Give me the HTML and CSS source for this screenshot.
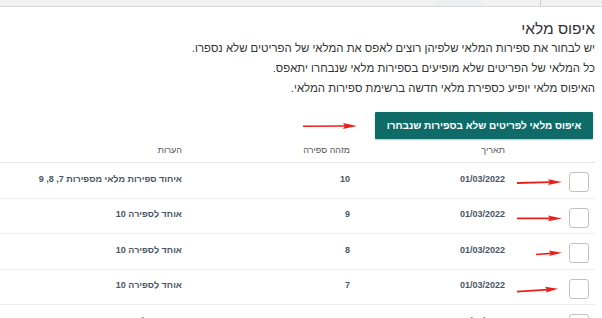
FILE: index.html
```html
<!DOCTYPE html>
<html lang="he" dir="rtl">
<head>
<meta charset="utf-8">
<link rel="stylesheet" href="styles.css">
</head>
<body>
<div class="topbar">
  <div class="tb-seg tb-a"></div>
  <div class="tb-seg tb-b"></div>
  <div class="tb-seg tb-c"></div>
  <div class="tb-seg tb-d"></div>
</div>
<main class="page">
  <h1 class="title">איפוס מלאי</h1>
  <div class="intro">
    <p>יש לבחור את ספירות המלאי שלפיהן רוצים לאפס את המלאי של הפריטים שלא נספרו.</p>
    <p>כל המלאי של הפריטים שלא מופיעים בספירות מלאי שנבחרו יתאפס.</p>
    <p>האיפוס מלאי יופיע כספירת מלאי חדשה ברשימת ספירות המלאי.</p>
  </div>
  <div class="actions">
    <button class="btn">איפוס מלאי לפריטים שלא בספירות שנבחרו</button>
    <svg class="arrow arrow-btn" width="56" height="8" viewBox="0 0 56 8"><path d="M2 4.2 L44 4" stroke="#e8211b" stroke-width="1.6" fill="none"/><path d="M56 4 L42 1 L44 4 L42 7 Z" fill="#e8211b"/></svg>
  </div>
  <div class="table">
    <div class="row head">
      <div class="c c-check"></div>
      <div class="c">תאריך</div>
      <div class="c">מזהה ספירה</div>
      <div class="c">הערות</div>
    </div>
    <div class="row">
      <div class="c c-check"><span class="box"></span><svg class="arrow" width="46" height="8" viewBox="0 0 46 8"><path d="M1 5 L34 4.2" stroke="#e8211b" stroke-width="1.8" fill="none"/><path d="M46 4 L32 1.2 L34 4.2 L32 7 Z" fill="#e8211b"/></svg></div>
      <div class="c">01/03/2022</div>
      <div class="c">10</div>
      <div class="c">איחוד ספירות מלאי מספירות 7, 8, 9</div>
    </div>
    <div class="row">
      <div class="c c-check"><span class="box"></span><svg class="arrow" width="46" height="8" viewBox="0 0 46 8"><path d="M1 4.4 L34 4.4" stroke="#e8211b" stroke-width="1.8" fill="none"/><path d="M46 4.4 L32 1.6 L34 4.4 L32 7.2 Z" fill="#e8211b"/></svg></div>
      <div class="c">01/03/2022</div>
      <div class="c">9</div>
      <div class="c">אוחד לספירה 10</div>
    </div>
    <div class="row">
      <div class="c c-check"><span class="box"></span><svg class="arrow" width="46" height="8" viewBox="0 0 46 8"><path d="M20 5.5 L35 4.4" stroke="#e8211b" stroke-width="1.6" fill="none"/><path d="M46 3.8 L33 1.6 L35 4.4 L33 7 Z" fill="#e8211b"/></svg></div>
      <div class="c">01/03/2022</div>
      <div class="c">8</div>
      <div class="c">אוחד לספירה 10</div>
    </div>
    <div class="row">
      <div class="c c-check"><span class="box"></span><svg class="arrow" width="46" height="8" viewBox="0 0 46 8"><path d="M1 6.6 L32 4.6" stroke="#e8211b" stroke-width="1.6" fill="none"/><path d="M42 3.8 L29 1.8 L31 4.6 L30 7.4 Z" fill="#e8211b"/></svg></div>
      <div class="c">01/03/2022</div>
      <div class="c">7</div>
      <div class="c">אוחד לספירה 10</div>
    </div>
    <div class="row">
      <div class="c c-check"><span class="box"></span></div>
      <div class="c">10/02/2021</div>
      <div class="c">6</div>
      <div class="c">ספירת מלאי חודשית</div>
    </div>
  </div>
</main>
</body>
</html>
```

FILE: styles.css
```css
* { box-sizing: border-box; }
html, body { margin: 0; padding: 0; background: #fff; }
body {
  font-family: "Liberation Sans", Arial, sans-serif;
  color: #333;
  overflow: hidden;
}
.topbar {
  height: 7px;
  background: #f2f2f2;
  border-bottom: 1px solid #d8d8d8;
  display: flex;
  direction: ltr;
}
.tb-seg { height: 100%; }
.tb-a { width: 435px; }
.tb-b { width: 48px; background: #ebefef; }
.tb-c { width: 58px; border-right: 1px solid #cfcfcf; }
.tb-d { flex: 1; }
.page {
  padding: 0 7px 0 0;
}
.title {
  margin: 12px 0 0;
  font-size: 15.5px;
  font-weight: normal;
  line-height: 20px;
  color: #333;
}
.intro { margin-top: -1px; }
.intro p {
  margin: 0;
  font-size: 11.4px;
  line-height: 20px;
  color: #333;
}
.actions {
  display: flex;
  align-items: center;
  gap: 18px;
  margin-top: 14px;
}
.btn {
  width: 218px;
  height: 27px;
  margin-right: 2px;
  background: #0f6b68;
  color: #fff;
  border: 0;
  border-radius: 1px;
  box-shadow: 0 1px 2px rgba(0,0,0,.25);
  font-family: "Liberation Sans", Arial, sans-serif;
  font-weight: bold;
  font-size: 10px;
  padding: 0;
}
.arrow { display: block; }
.table { margin-top: 2px; width: 595px; }
.row {
  display: grid;
  grid-template-columns: 90px 155px 168px 1fr;
  align-items: center;
  height: 35.5px;
  border-bottom: 1px solid #efefef;
  font-size: 9px;
  font-weight: bold;
  color: #4b5563;
}
.row.head {
  height: 22px;
  border-bottom-color: #e6e6e6;
  font-weight: normal;
  font-size: 9px;
  color: #555;
}
.c { text-align: right; padding-bottom: 3px; }
.c-check {
  display: flex;
  align-items: center;
  gap: 7px;
  padding: 4px 6px 0 0;
}
.box {
  width: 20px;
  height: 20px;
  border: 1px solid #c2c2c2;
  border-radius: 3px;
  background: #fff;
  flex: none;
}
```
